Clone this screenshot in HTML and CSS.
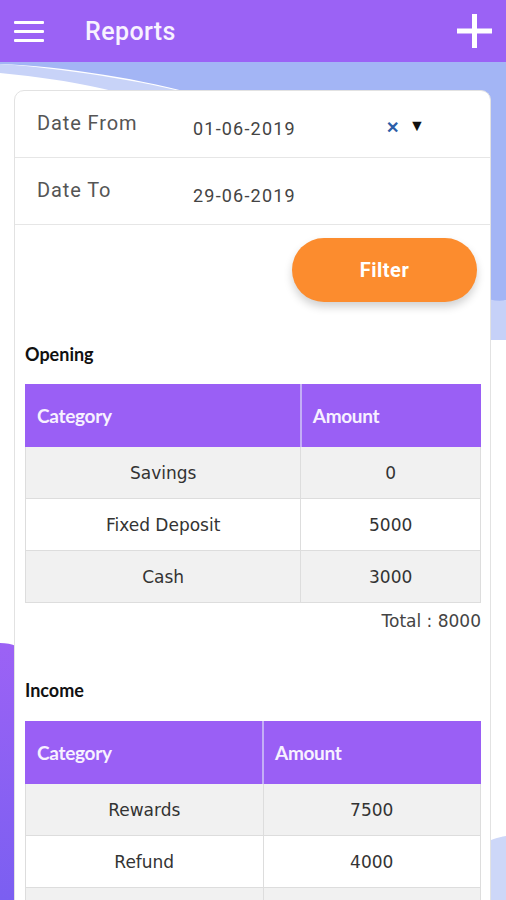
FILE: index.html
```html
<!DOCTYPE html>
<html lang="en">
<head>
    <meta charset="UTF-8">
    <meta name="viewport" content="width=device-width, initial-scale=1.0">
    <title>Reports</title>
    <link rel="stylesheet" href="styles.css">
</head>
<body>
    <header class="topbar">
        <svg class="menu-icon" width="30" height="22" viewBox="0 0 30 22">
            <rect x="0" y="0" width="30" height="3" rx="1" fill="#fff"/>
            <rect x="0" y="9" width="30" height="3" rx="1" fill="#fff"/>
            <rect x="0" y="18" width="30" height="3" rx="1" fill="#fff"/>
        </svg>
        <h1 class="title">Reports</h1>
        <svg class="add-icon" width="35" height="34" viewBox="0 0 35 34">
            <rect x="15" y="0" width="5" height="34" fill="#fff"/>
            <rect x="0" y="14.5" width="35" height="5" fill="#fff"/>
        </svg>
    </header>

    <div class="page">
        <!-- decorative background waves -->
        <svg class="bg-waves" width="506" height="838" viewBox="0 62 506 838">
            <defs>
                <linearGradient id="leftBlob" x1="0" y1="0" x2="0" y2="1">
                    <stop offset="0" stop-color="#9c62f5"/>
                    <stop offset="1" stop-color="#7b5ff1"/>
                </linearGradient>
            </defs>
            <rect x="0" y="62" width="506" height="838" fill="#ffffff"/>
            <path d="M0 62 H506 V300 C470 320 420 300 360 260 C300 200 250 120 200 96 C150 80 60 66 0 64 Z" fill="#a3b5f5"/>
            <path d="M0 64 C60 68 140 80 200 96 C140 100 60 96 0 90 Z" fill="#c8d3f8"/>
            <path d="M0 73 C50 78 100 86 125 95 L0 96 Z" fill="#ffffff"/>
            <path d="M480 296 C490 300 498 302 506 300 V340 H480 Z" fill="#c6d1f8"/>
            <path d="M0 643 C6 643 12 644 16 646 V900 H0 Z" fill="url(#leftBlob)"/>
            <path d="M480 845 C490 840 498 837 506 836 V900 H480 Z" fill="#cdd7f8"/>
        </svg>

        <main class="card">
            <div class="field-row">
                <span class="field-label">Date From</span>
                <span class="field-value">01-06-2019</span>
                <span class="field-actions">
                    <span class="clear">&#x2715;</span>
                    <span class="caret">&#9660;</span>
                </span>
            </div>
            <div class="field-row">
                <span class="field-label">Date To</span>
                <span class="field-value">29-06-2019</span>
            </div>

            <div class="filter-wrap">
                <button class="filter-btn" type="button">Filter</button>
            </div>

            <section class="report">
                <h2 class="report-title">Opening</h2>
                <table class="report-table">
                    <colgroup>
                        <col style="width: 60.5%">
                        <col>
                    </colgroup>
                    <thead>
                        <tr><th>Category</th><th>Amount</th></tr>
                    </thead>
                    <tbody>
                        <tr><td>Savings</td><td>0</td></tr>
                        <tr><td>Fixed Deposit</td><td>5000</td></tr>
                        <tr><td>Cash</td><td>3000</td></tr>
                    </tbody>
                </table>
                <p class="total">Total : 8000</p>
            </section>

            <section class="report report-income">
                <h2 class="report-title">Income</h2>
                <table class="report-table">
                    <colgroup>
                        <col style="width: 52.2%">
                        <col>
                    </colgroup>
                    <thead>
                        <tr><th>Category</th><th>Amount</th></tr>
                    </thead>
                    <tbody>
                        <tr><td>Rewards</td><td>7500</td></tr>
                        <tr><td>Refund</td><td>4000</td></tr>
                        <tr><td></td><td></td></tr>
                    </tbody>
                </table>
            </section>
        </main>
    </div>
</body>
</html>
```

FILE: styles.css
```css
* {
    margin: 0;
    padding: 0;
    box-sizing: border-box;
}

body {
    font-family: 'Roboto', 'Liberation Sans', sans-serif;
    width: 506px;
    height: 900px;
    overflow: hidden;
    background-color: #ffffff;
}

.topbar {
    height: 62px;
    background-color: #9b62f5;
    display: flex;
    align-items: center;
    padding: 0 14px;
}

.menu-icon {
    display: block;
    margin-top: 1px;
}

.title {
    margin-left: 41px;
    color: #f8f2ff;
    font-size: 25px;
    font-weight: 500;
    letter-spacing: 0.4px;
}

.add-icon {
    display: block;
    margin-left: auto;
}

.page {
    position: relative;
    height: 838px;
    padding: 28px 15px 0 14px;
}

.bg-waves {
    position: absolute;
    top: 0;
    left: 0;
    z-index: 0;
}

.card {
    position: relative;
    z-index: 1;
    background-color: #ffffff;
    border: 1px solid #e2e2e2;
    border-radius: 10px;
    height: 840px;
    overflow: hidden;
}

.field-row {
    display: flex;
    align-items: center;
    height: 67px;
    border-bottom: 1px solid #e6e6e6;
    padding-left: 22px;
}

.field-label {
    width: 156px;
    color: #555555;
    font-size: 20px;
    letter-spacing: 0.9px;
    margin-top: -2px;
}

.field-value {
    color: #444444;
    font-size: 18px;
    letter-spacing: 1.2px;
    margin-top: 8px;
}

.field-actions {
    margin-left: 90px;
    margin-top: 6px;
    display: flex;
    align-items: center;
    gap: 10px;
}

.clear {
    color: #2d5ea8;
    font-size: 16px;
    font-weight: bold;
}

.caret {
    color: #111111;
    font-size: 16px;
    margin-top: -4px;
}

.filter-wrap {
    display: flex;
    justify-content: flex-end;
    padding: 13px 13px 0 0;
}

.filter-btn {
    width: 185px;
    height: 64px;
    border: none;
    border-radius: 32px;
    background-color: #fc8c2e;
    color: #ffffff;
    font-family: 'Roboto', sans-serif;
    font-size: 20px;
    font-weight: bold;
    letter-spacing: 0.5px;
    box-shadow: 0 5px 8px rgba(0, 0, 0, 0.18);
}

.report {
    padding: 0 9px 0 10px;
}

.report-title {
    font-family: 'Lato', sans-serif;
    font-size: 18px;
    font-weight: bold;
    color: #111111;
    margin-top: 41px;
    line-height: 22px;
}

.report-income .report-title {
    margin-top: 48px;
}

.report-table {
    width: 100%;
    border-collapse: collapse;
    margin-top: 19px;
    table-layout: fixed;
}

.report-income .report-table {
    margin-top: 20px;
}

.report-table th {
    height: 62px;
    background-color: #9a5ff5;
    color: #f7f1ff;
    font-family: 'Lato', sans-serif;
    font-size: 19px;
    font-weight: bold;
    text-align: left;
    padding-left: 11px;
    letter-spacing: -0.3px;
    border: 1px solid #9a5ff5;
    border-right: 2px solid #c4aef6;
}

.report-table th:last-child {
    border-right: 1px solid #9a5ff5;
}

.report-table td {
    height: 52px;
    text-align: center;
    font-family: 'DejaVu Sans', sans-serif;
    font-size: 17px;
    color: #333333;
    border: 1px solid #dddddd;
}

.report-table tbody tr:nth-child(odd) td {
    background-color: #f1f1f1;
}

.total {
    text-align: right;
    font-family: 'DejaVu Sans', sans-serif;
    font-size: 17px;
    color: #444444;
    margin-top: 8px;
    line-height: 20px;
}
```
